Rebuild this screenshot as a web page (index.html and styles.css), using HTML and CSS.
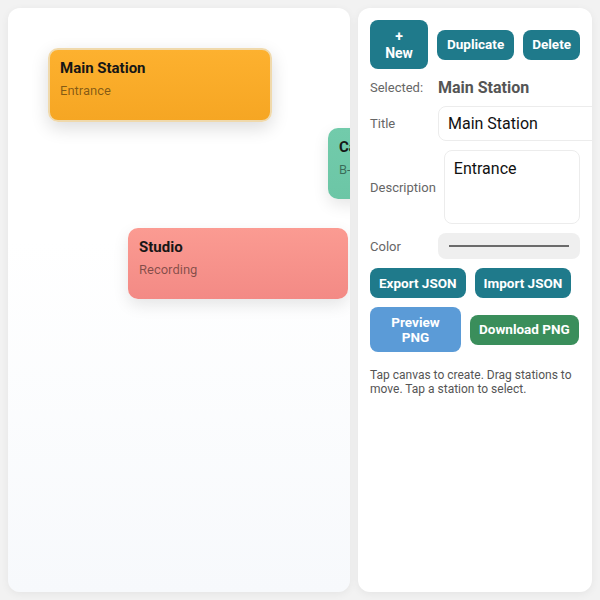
FILE: index.html
```html
<!DOCTYPE html>
<html>
<head>
<meta charset="utf-8">
<link rel="stylesheet" href="styles.css">
</head>
<body>
<div class="app">
  <div class="canvas">
    <div class="station selected orange" style="left:40px;top:40px;">
      <div class="st-title">Main Station</div>
      <div class="st-desc">Entrance</div>
    </div>
    <div class="station green" style="left:320px;top:120px;">
      <div class="st-title">Cafe</div>
      <div class="st-desc">B-Level</div>
    </div>
    <div class="station pink" style="left:120px;top:220px;">
      <div class="st-title">Studio</div>
      <div class="st-desc">Recording</div>
    </div>
  </div>
  <div class="panel">
    <div class="btn-row">
      <button class="btn teal new">+ New</button>
      <button class="btn teal wide">Duplicate</button>
      <button class="btn teal">Delete</button>
    </div>
    <div class="row">
      <span class="label">Selected:</span>
      <span class="sel-value">Main Station</span>
    </div>
    <div class="row">
      <span class="label">Title</span>
      <input class="field title-field" type="text" value="Main Station">
    </div>
    <div class="row">
      <span class="label">Description</span>
      <textarea class="field desc-field">Entrance</textarea>
    </div>
    <div class="row">
      <span class="label">Color</span>
      <div class="color-field"><div class="color-line"></div></div>
    </div>
    <div class="btn-row">
      <button class="btn teal">Export JSON</button>
      <button class="btn teal">Import JSON</button>
    </div>
    <div class="btn-row">
      <button class="btn blue preview">Preview PNG</button>
      <button class="btn green-btn">Download PNG</button>
    </div>
    <p class="help">Tap canvas to create. Drag stations to move. Tap a station to select.</p>
  </div>
</div>
</body>
</html>
```
FILE: styles.css
```css
* { box-sizing: border-box; }
html, body { margin: 0; padding: 0; }
body {
  background: #f2f2f2;
  font-family: Roboto, "Liberation Sans", sans-serif;
  width: 600px;
  height: 600px;
  overflow: hidden;
}
.app {
  display: flex;
  gap: 8px;
  padding: 8px;
  height: 600px;
}
.canvas {
  position: relative;
  width: 342px;
  height: 584px;
  border-radius: 12px;
  background: linear-gradient(180deg, #ffffff 0%, #ffffff 40%, #f7f9fc 100%);
  box-shadow: 0 2px 8px rgba(0,0,0,0.06);
  overflow: hidden;
}
.station {
  position: absolute;
  width: 220px;
  height: 71px;
  border-radius: 10px;
  padding: 10px 11px;
  box-shadow: 0 6px 16px rgba(0,0,0,0.10);
}
.station.selected {
  width: 224px;
  height: 74px;
  border: 2px solid #f0d9ab;
  padding: 9px 10px;
  box-shadow: 0 6px 18px rgba(0,0,0,0.14);
}
.orange { background: linear-gradient(180deg, #fdb12f 0%, #f6a623 100%); }
.green { background: linear-gradient(180deg, #72cbab 0%, #6cc6a6 100%); }
.pink { background: linear-gradient(180deg, #fb9b92 0%, #f38a85 100%); }
.st-title {
  font-size: 15px;
  font-weight: 700;
  color: #161616;
  line-height: 18px;
  white-space: nowrap;
}
.st-desc {
  margin-top: 6px;
  font-size: 13px;
  color: rgba(0,0,0,0.48);
  line-height: 16px;
  white-space: nowrap;
}
.panel {
  width: 234px;
  height: 584px;
  background: #ffffff;
  border-radius: 12px;
  box-shadow: 0 2px 8px rgba(0,0,0,0.06);
  padding: 12px;
  display: flex;
  flex-direction: column;
  gap: 9px;
  overflow: hidden;
}
.btn-row {
  display: flex;
  align-items: center;
  gap: 9px;
}
.btn {
  border: none;
  border-radius: 8px;
  color: #ffffff;
  font-family: Roboto, "Liberation Sans", sans-serif;
  font-weight: 700;
  font-size: 13.5px;
  line-height: 15px;
  height: 30px;
  padding: 0 9px;
  white-space: nowrap;
  flex-shrink: 0;
}
.btn.wide { padding: 0 10px; }
.teal { background: #1f7a8b; }
.blue { background: #5b9bd7; }
.green-btn { background: #3a8e5b; }
.btn.new {
  width: 58px;
  height: 49px;
  padding: 0 13px;
  white-space: normal;
  font-size: 14px;
  line-height: 17px;
}
.btn.preview {
  width: 91px;
  height: 45px;
  white-space: normal;
}
.row {
  display: flex;
  align-items: center;
  gap: 8px;
  flex-shrink: 0;
}
.label {
  min-width: 60px;
  font-size: 13px;
  color: #666666;
  white-space: nowrap;
}
.sel-value {
  font-size: 16px;
  font-weight: 700;
  color: #555555;
  line-height: 19px;
}
.field {
  font-family: Roboto, "Liberation Sans", sans-serif;
  font-size: 16px;
  color: #111111;
  border: 1px solid #ececec;
  border-radius: 8px;
  padding: 0 9px;
  background: #ffffff;
  outline: none;
}
.title-field {
  width: 175px;
  height: 35px;
  flex-shrink: 0;
}
.desc-field {
  width: 136px;
  height: 74px;
  padding: 8px 9px;
  resize: none;
  line-height: 19px;
}
.color-field {
  width: 142px;
  height: 26px;
  background: #efefef;
  border-radius: 8px;
  display: flex;
  align-items: center;
  padding: 0 11px;
}
.color-line {
  width: 100%;
  height: 2px;
  background: #6b6b6b;
}
.help {
  margin: 7px 0 0 0;
  font-size: 12px;
  line-height: 14px;
  color: #555555;
}
```
